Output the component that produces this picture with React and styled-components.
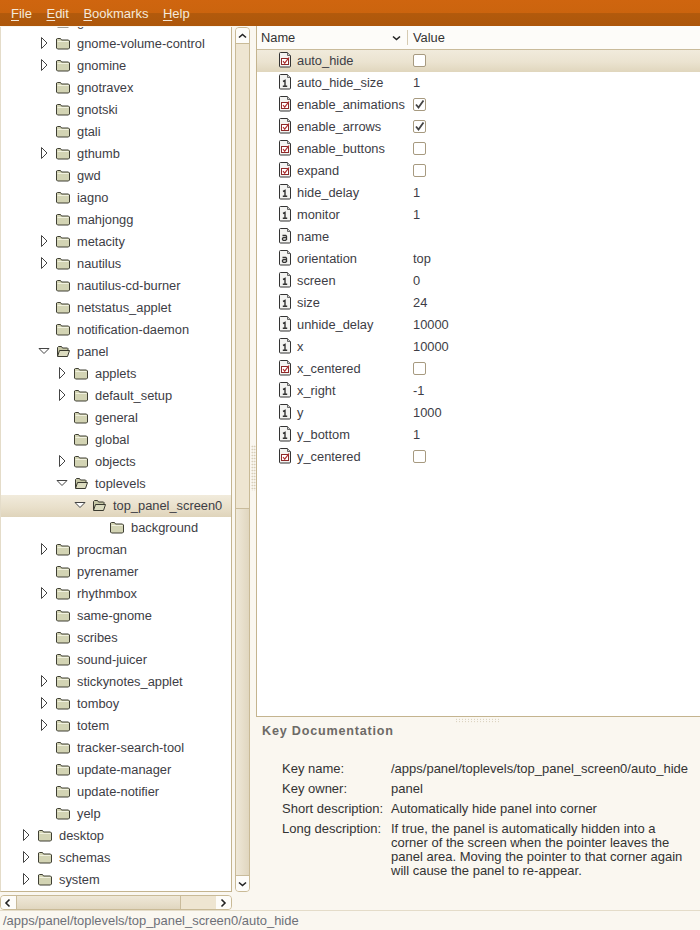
import React from "react";
import styled, { createGlobalStyle } from "styled-components";

const GlobalStyle = createGlobalStyle`
  html, body { margin: 0; padding: 0; background: #faf7f0; }
  body { font-family: "Liberation Sans", Arial, sans-serif; font-size: 13px; color: #333; }
`;

const Window = styled.div`
  width: 700px;
  height: 930px;
  display: flex;
  flex-direction: column;
  overflow: hidden;
  background: #faf7f0;
`;

const MenuBar = styled.div`
  height: 26px;
  flex: none;
  display: flex;
  align-items: center;
  gap: 14.5px;
  padding: 0 11px;
  background: linear-gradient(#cf650f 0, #cb640e 50%, #b25a0c 52%, #ad570b 100%);
  box-sizing: border-box;
`;

const MenuItem = styled.span`
  color: #f5e9da;
  font-size: 13px;
  line-height: 25px;
  u { text-underline-offset: 2px; }
`;

const Panes = styled.div`
  flex: 1;
  min-height: 0;
  display: flex;
`;

const LeftPane = styled.div`
  width: 250px;
  flex: none;
  display: flex;
  flex-direction: column;
  padding-top: 1px;
  box-sizing: border-box;
`;

const LeftTop = styled.div`
  flex: 1;
  min-height: 0;
  display: flex;
  gap: 3px;
`;

const TreeBox = styled.div`
  width: 232px;
  flex: none;
  box-sizing: border-box;
  background: #fff;
  border: 1px solid #c4b48f;
  border-top: none;
  border-left-color: #e4dcc9;
  overflow: hidden;
`;

const TreeList = styled.div`
  margin-top: -16px;
  margin-left: -1px;
`;

const Row = styled.div`
  height: 22px;
  box-sizing: border-box;
  display: flex;
  align-items: center;
  padding-left: ${(p) => p.$depth * 18 + 20}px;
  padding-bottom: 2px;
  font-size: 12.85px;
  color: #3d3d45;
  white-space: nowrap;
  background: ${(p) =>
    p.$selected ? "linear-gradient(#f1ebdc 0, #e9e0cb 55%, #dfd4bb 100%)" : "transparent"};
`;

const ArrowSlot = styled.span`
  width: 12px;
  height: 12px;
  flex: none;
  display: flex;
  align-items: center;
  justify-content: center;
  margin-right: 6px;
`;

const Label = styled.span`
  margin-left: 7px;
`;

const VScroll = styled.div`
  width: 15px;
  flex: none;
  display: flex;
  flex-direction: column;
  background: #eee5d1;
  border-radius: 4px;
  box-sizing: border-box;
  border: 1px solid #c9ba96;
  overflow: hidden;
`;

const ScrollButton = styled.div`
  flex: none;
  width: ${(p) => (p.$horizontal ? "15px" : "auto")};
  height: ${(p) => (p.$horizontal ? "auto" : "15px")};
  background: #fdfcf9;
  display: flex;
  align-items: center;
  justify-content: center;
`;

const ThumbSpace = styled.div`
  flex: ${(p) => p.$grow};
  min-width: 0;
  min-height: 0;
  border: 0 solid #c9ba96;
  border-width: ${(p) => (p.$horizontal ? "0" : "1px 0 0")};
`;

const VThumb = styled.div`
  flex: ${(p) => p.$grow};
  background: linear-gradient(90deg, #efe8d8, #e0d6bf);
  border-top: 1px solid #c9bb9b;
  border-bottom: 1px solid #c9bb9b;
`;

const HScroll = styled.div`
  height: 15px;
  width: 232px;
  flex: none;
  margin-top: 3px;
  display: flex;
  box-sizing: border-box;
  background: #eee5d1;
  border: 1px solid #c9ba96;
  border-radius: 4px;
  overflow: hidden;
`;

const HThumb = styled.div`
  flex: ${(p) => p.$grow};
  background: linear-gradient(#efe8d8, #e0d6bf);
  border-right: 1px solid #c9bb9b;
  border-left: 1px solid #c9bb9b;
`;

const Gutter = styled.div`
  width: 6px;
  flex: none;
  display: flex;
  align-items: center;
  justify-content: center;
`;

const VDots = styled.div`
  width: 5px;
  height: 46px;
  background-image: radial-gradient(#cfc5ae 0.7px, transparent 0.9px);
  background-size: 2.5px 3px;
`;

const RightPane = styled.div`
  flex: 1;
  min-width: 0;
  display: flex;
  flex-direction: column;
`;

const KeyBox = styled.div`
  height: 691px;
  flex: none;
  box-sizing: border-box;
  background: #fff;
  border: 1px solid #c4b48f;
  border-right: none;
  border-top: none;
`;

const HeadRow = styled.div`
  height: 24px;
  display: flex;
  align-items: center;
  background: #fdfcf9;
  border-bottom: 1px solid #c9bb9b;
  color: #333;
  font-size: 12.85px;
  box-sizing: border-box;
`;

const NameHead = styled.div`
  width: 151px;
  flex: none;
  box-sizing: border-box;
  padding: 0 5px 0 4px;
  display: flex;
  align-items: center;
  justify-content: space-between;
  border-right: 1px solid #d6cbb2;
  height: 15px;
`;

const ValueHead = styled.div`
  padding-left: 5px;
`;

const KeyRow = styled.div`
  height: 22px;
  box-sizing: border-box;
  padding-bottom: 2px;
  display: flex;
  align-items: center;
  font-size: 12.85px;
  color: #3d3d45;
  background: ${(p) =>
    p.$selected ? "linear-gradient(#f1ebdc 0, #ebe3d0 55%, #e0d6bd 100%)" : "transparent"};
`;

const KeyIcon = styled.span`
  width: 14px;
  height: 16px;
  flex: none;
  margin-left: 21px;
  display: flex;
`;

const KeyName = styled.span`
  width: 116px;
  flex: none;
  margin-left: 5px;
  white-space: nowrap;
`;

const KeyValue = styled.span`
  color: #3d3d45;
  display: flex;
  align-items: center;
`;

const CheckBox = styled.span`
  width: 11px;
  height: 11px;
  display: inline-flex;
  align-items: center;
  justify-content: center;
  background: #fff;
  border: 1px solid #a79a80;
  border-radius: 2px;
`;

const DragDots = styled.div`
  height: 6px;
  flex: none;
  display: flex;
  justify-content: center;
  padding-top: 1px;
`;

const DotStrip = styled.div`
  width: 46px;
  height: 5px;
  background-image: radial-gradient(#cfc5ae 0.7px, transparent 0.9px);
  background-size: 3px 2.5px;
`;

const Docs = styled.div`
  flex: 1;
  min-height: 0;
  padding-left: 6px;
`;

const DocsTitle = styled.div`
  font-size: 12.6px;
  font-weight: bold;
  color: #6d6a66;
  letter-spacing: 0.8px;
  height: 37px;
  line-height: 14px;
`;

const DocsGrid = styled.div`
  display: grid;
  grid-template-columns: 105px 1fr;
  padding-left: 20px;
  column-gap: 4px;
  row-gap: 4px;
  font-size: 13px;
  color: #333;
`;

const DocsLabel = styled.div`
  line-height: 16px;
`;

const DocsText = styled.div`
  line-height: 14px;
  padding-top: 1px;
  white-space: pre-line;
`;

const StatusBar = styled.div`
  height: 20px;
  flex: none;
  display: flex;
  align-items: center;
  padding-left: 3px;
  box-sizing: border-box;
  border-top: 1px solid #e4dcc9;
  font-size: 12.95px;
  color: #6e7078;
`;

const Arrow = ({ open }) => (
  <svg width="12" height="12" viewBox="0 0 12 12">
    {open ? (
      <path d="M1 3.500h10L6 8.500z" fill="#fff" stroke="#444" strokeWidth="1" />
    ) : (
      <path d="M3.500 .5v11L9 6z" fill="#fff" stroke="#444" strokeWidth="1" />
    )}
  </svg>
);

const Folder = ({ open }) => (
  <svg width="14" height="13" viewBox="0 0 14 13">
    {open ? (
      <>
        <path d="M1.500 11V2.500l1-1h3l1 1.500h5l.5.5V5" fill="#c6c7a5" stroke="#3a3a30" />
        <path d="M1.500 11.500 3.500 5.500h10l-2 6z" fill="#dcdcc0" stroke="#3a3a30" strokeLinejoin="round" />
      </>
    ) : (
      <>
        <path d="M.5 3V2l1-.5h3L5.500 3h7l1 1v7l-1 1h-11l-1-1z" fill="#d3d4b4" stroke="#3f3f33" strokeLinejoin="round" />
        <path d="M1.500 4.500h11" stroke="#f1f1df" />
      </>
    )}
  </svg>
);

const Chevron = ({ dir }) => {
  const d = {
    up: "M2 6.500 5.500 3.500 9 6.500",
    down: "M2 3.500 5.500 6.500 9 3.500",
    left: "M6.500 1.500 3 5 6.500 8.500",
    right: "M3.500 1.500 7 5 3.500 8.500",
  }[dir];
  return (
    <svg width="11" height="10" viewBox="0 0 11 10">
      <path d={d} fill="none" stroke="#222" strokeWidth="1.6" />
    </svg>
  );
};

const TypeIcon = ({ type }) => (
  <svg width="14" height="16" viewBox="0 0 14 16">
    <path d="M1.500 1.500q0-1 1-1h7l3 3v10.500q0 1-1 1h-9q-1 0-1-1z" fill="#f3f3f1" stroke="#333" strokeLinejoin="round" />
    <path d="M9.500 .5v3h3" fill="#ccc" stroke="#666" />
    {type === "bool" && (
      <>
        <rect x="3.500" y="6.500" width="7" height="6" fill="#fff" stroke="#8c2a2a" />
        <path d="M5 9 6.700 11.200 11 5.500" fill="none" stroke="#b03030" strokeWidth="1.200" />
      </>
    )}
    {type === "int" && (
      <path d="M5 7.500 7 6.500V12M4.800 12.300h4.400" fill="none" stroke="#333" strokeWidth="1.400" />
    )}
    {type === "str" && (
      <path d="M4.500 7.500h3.300l.7.700V12M8.500 9.700H5.300l-.8.700v1.200l.7.700h2.300l1-.8" fill="none" stroke="#333" strokeWidth="1.300" />
    )}
  </svg>
);

const Tick = () => (
  <svg width="11" height="11" viewBox="0 0 11 11">
    <path d="M2 5.500 4.500 8.500 9.500 1.500" fill="none" stroke="#444" strokeWidth="1.800" />
  </svg>
);

// depth, name, arrow state (undefined = leaf)
const TREE = [
  [2, "gnome-terminal", "closed"],
  [2, "gnome-volume-control", "closed"],
  [2, "gnomine", "closed"],
  [2, "gnotravex"],
  [2, "gnotski"],
  [2, "gtali"],
  [2, "gthumb", "closed"],
  [2, "gwd"],
  [2, "iagno"],
  [2, "mahjongg"],
  [2, "metacity", "closed"],
  [2, "nautilus", "closed"],
  [2, "nautilus-cd-burner"],
  [2, "netstatus_applet"],
  [2, "notification-daemon"],
  [2, "panel", "open"],
  [3, "applets", "closed"],
  [3, "default_setup", "closed"],
  [3, "general"],
  [3, "global"],
  [3, "objects", "closed"],
  [3, "toplevels", "open"],
  [4, "top_panel_screen0", "open", true],
  [5, "background"],
  [2, "procman", "closed"],
  [2, "pyrenamer"],
  [2, "rhythmbox", "closed"],
  [2, "same-gnome"],
  [2, "scribes"],
  [2, "sound-juicer"],
  [2, "stickynotes_applet", "closed"],
  [2, "tomboy", "closed"],
  [2, "totem", "closed"],
  [2, "tracker-search-tool"],
  [2, "update-manager"],
  [2, "update-notifier"],
  [2, "yelp"],
  [1, "desktop", "closed"],
  [1, "schemas", "closed"],
  [1, "system", "closed"],
];

const KEYS = [
  ["auto_hide", "bool", false],
  ["auto_hide_size", "int", "1"],
  ["enable_animations", "bool", true],
  ["enable_arrows", "bool", true],
  ["enable_buttons", "bool", false],
  ["expand", "bool", false],
  ["hide_delay", "int", "1"],
  ["monitor", "int", "1"],
  ["name", "str", ""],
  ["orientation", "str", "top"],
  ["screen", "int", "0"],
  ["size", "int", "24"],
  ["unhide_delay", "int", "10000"],
  ["x", "int", "10000"],
  ["x_centered", "bool", false],
  ["x_right", "int", "-1"],
  ["y", "int", "1000"],
  ["y_bottom", "int", "1"],
  ["y_centered", "bool", false],
];

export default function App() {
  return (
    <Window>
      <GlobalStyle />
      <MenuBar>
        <MenuItem><u>F</u>ile</MenuItem>
        <MenuItem><u>E</u>dit</MenuItem>
        <MenuItem><u>B</u>ookmarks</MenuItem>
        <MenuItem><u>H</u>elp</MenuItem>
      </MenuBar>
      <Panes>
        <LeftPane>
          <LeftTop>
            <TreeBox>
              <TreeList>
                {TREE.map(([depth, name, arrow, selected]) => (
                  <Row key={name} $depth={depth - 1} $selected={selected}>
                    <ArrowSlot>{arrow && <Arrow open={arrow === "open"} />}</ArrowSlot>
                    <Folder open={arrow === "open"} />
                    <Label>{name}</Label>
                  </Row>
                ))}
              </TreeList>
            </TreeBox>
            <VScroll>
              <ScrollButton><Chevron dir="up" /></ScrollButton>
              <ThumbSpace $grow={466} />
              <VThumb $grow={368} />
              <ScrollButton><Chevron dir="down" /></ScrollButton>
            </VScroll>
          </LeftTop>
          <HScroll>
            <ScrollButton $horizontal><Chevron dir="left" /></ScrollButton>
            <HThumb $grow={165} />
            <ThumbSpace $grow={36} $horizontal />
            <ScrollButton $horizontal><Chevron dir="right" /></ScrollButton>
          </HScroll>
        </LeftPane>
        <Gutter><VDots /></Gutter>
        <RightPane>
          <KeyBox>
            <HeadRow>
              <NameHead>
                Name
                <Chevron dir="down" />
              </NameHead>
              <ValueHead>Value</ValueHead>
            </HeadRow>
            {KEYS.map(([name, type, value], i) => (
              <KeyRow key={name} $selected={i === 0}>
                <KeyIcon><TypeIcon type={type} /></KeyIcon>
                <KeyName>{name}</KeyName>
                <KeyValue>
                  {type === "bool" ? <CheckBox>{value && <Tick />}</CheckBox> : value}
                </KeyValue>
              </KeyRow>
            ))}
          </KeyBox>
          <DragDots><DotStrip /></DragDots>
          <Docs>
            <DocsTitle>Key Documentation</DocsTitle>
            <DocsGrid>
              <DocsLabel>Key name:</DocsLabel>
              <DocsText>/apps/panel/toplevels/top_panel_screen0/auto_hide</DocsText>
              <DocsLabel>Key owner:</DocsLabel>
              <DocsText>panel</DocsText>
              <DocsLabel>Short description:</DocsLabel>
              <DocsText>Automatically hide panel into corner</DocsText>
              <DocsLabel>Long description:</DocsLabel>
              <DocsText>{"If true, the panel is automatically hidden into a\ncorner of the screen when the pointer leaves the\npanel area. Moving the pointer to that corner again\nwill cause the panel to re-appear."}</DocsText>
            </DocsGrid>
          </Docs>
        </RightPane>
      </Panes>
      <StatusBar>/apps/panel/toplevels/top_panel_screen0/auto_hide</StatusBar>
    </Window>
  );
}
